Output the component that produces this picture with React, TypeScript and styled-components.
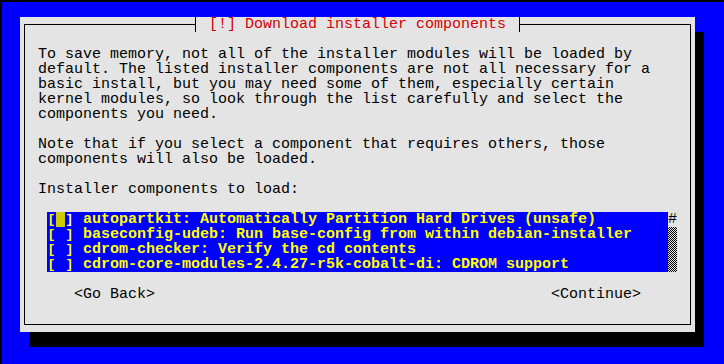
import React from "react";
import styled, { createGlobalStyle } from "styled-components";

const GlobalStyle = createGlobalStyle`
  html, body { margin: 0; padding: 0; background: #000; }
  body { font-family: "Liberation Mono", "DejaVu Sans Mono", monospace; }
`;

const CELL_W = 9;
const CELL_H = 15;
const GRAY = "#e4e4e4";
const BLUE = "#0000ff";

const Screen = styled.div`
  width: 720px;
  height: 360px;
  border: 2px solid #000;
  background: ${BLUE};
  padding: ${CELL_H}px 0 0 ${CELL_W * 2}px;
  box-sizing: content-box;
`;

const Dialog = styled.div`
  width: ${CELL_W * 75}px;
  height: ${CELL_H * 21}px;
  box-sizing: border-box;
  padding: 7px 4px;
  background: ${GRAY};
  box-shadow: ${CELL_W}px ${CELL_H}px 0 0 #000;
  display: flex;
  flex-direction: column;
`;

const Frame = styled.div`
  position: relative;
  flex: 1;
  border: 1px solid #000;
  padding: 22px 0 0 13px;
  display: flex;
  flex-direction: column;
`;

const Title = styled.div`
  position: absolute;
  left: 170px;
  top: -8px;
  height: ${CELL_H}px;
  box-sizing: border-box;
  padding: 0 13px;
  border-left: 1px solid #000;
  border-right: 1px solid #000;
  background: ${GRAY};
  color: #d40000;
  font-size: 15px;
  line-height: ${CELL_H}px;
  white-space: pre;
`;

const Line = styled.div`
  height: ${CELL_H}px;
  font-size: 15px;
  line-height: ${CELL_H}px;
  white-space: pre;
  color: #000;
`;

const Block = styled.div`
  display: flex;
  flex-direction: column;
  margin-bottom: ${CELL_H}px;
`;

const ListRow = styled.div`
  display: flex;
  margin-left: ${CELL_W}px;
  margin-bottom: ${CELL_H}px;
`;

const List = styled.div`
  width: ${CELL_W * 69}px;
  background: ${BLUE};
  display: flex;
  flex-direction: column;
`;

const Item = styled.div`
  display: flex;
  height: ${CELL_H}px;
  font-size: 15px;
  line-height: ${CELL_H}px;
  white-space: pre;
  color: #ffff00;
  font-weight: bold;
`;

const Cell = styled.span<{ $white?: boolean; $cursor?: boolean }>`
  display: inline-block;
  width: ${CELL_W}px;
  height: ${CELL_H}px;
  line-height: ${CELL_H}px;
  font-size: 13px;
  text-align: center;
  overflow: hidden;
  color: ${(p) => (p.$white ? "#ffffff" : "#ffff00")};
  background: ${(p) => (p.$cursor ? "#cccc00" : "transparent")};
`;

const Label = styled.span`
  display: inline-block;
  height: ${CELL_H}px;
  line-height: ${CELL_H}px;
  overflow: hidden;
  padding-left: ${CELL_W}px;
`;

const Scrollbar = styled.div`
  width: ${CELL_W}px;
  display: flex;
  flex-direction: column;
`;

const ScrollArrow = styled.div`
  height: ${CELL_H}px;
  font-size: 15px;
  line-height: ${CELL_H}px;
  color: #000;
`;

const ScrollTrack = styled.div`
  flex: 1;
  background: repeating-conic-gradient(#000 0 25%, ${GRAY} 0 50%) 0 0 / 2px 2px;
`;

const Buttons = styled.div`
  display: flex;
  justify-content: space-between;
  margin-left: ${CELL_W * 4}px;
  width: ${CELL_W * 63}px;
`;

const Button = styled.div`
  height: ${CELL_H}px;
  font-size: 15px;
  line-height: ${CELL_H}px;
  white-space: pre;
  color: #000;
`;

const intro = [
  "To save memory, not all of the installer modules will be loaded by",
  "default. The listed installer components are not all necessary for a",
  "basic install, but you may need some of them, especially certain",
  "kernel modules, so look through the list carefully and select the",
  "components you need.",
];

const note = [
  "Note that if you select a component that requires others, those",
  "components will also be loaded.",
];

const items = [
  "autopartkit: Automatically Partition Hard Drives (unsafe)",
  "baseconfig-udeb: Run base-config from within debian-installer",
  "cdrom-checker: Verify the cd contents",
  "cdrom-core-modules-2.4.27-r5k-cobalt-di: CDROM support",
];

export default function App() {
  return (
    <>
      <GlobalStyle />
      <Screen>
        <Dialog>
          <Frame>
            <Title>[!] Download installer components</Title>
            <Block>
              {intro.map((l) => (
                <Line key={l}>{l}</Line>
              ))}
            </Block>
            <Block>
              {note.map((l) => (
                <Line key={l}>{l}</Line>
              ))}
            </Block>
            <Block>
              <Line>Installer components to load:</Line>
            </Block>
            <ListRow>
              <List>
                {items.map((it, i) => (
                  <Item key={it}>
                    <Cell>[</Cell>
                    <Cell $cursor={i === 0}> </Cell>
                    <Cell $white={i === 0}>]</Cell>
                    <Label>{it}</Label>
                  </Item>
                ))}
              </List>
              <Scrollbar>
                <ScrollArrow>#</ScrollArrow>
                <ScrollTrack />
              </Scrollbar>
            </ListRow>
            <Buttons>
              <Button>&lt;Go Back&gt;</Button>
              <Button>&lt;Continue&gt;</Button>
            </Buttons>
          </Frame>
        </Dialog>
      </Screen>
    </>
  );
}
